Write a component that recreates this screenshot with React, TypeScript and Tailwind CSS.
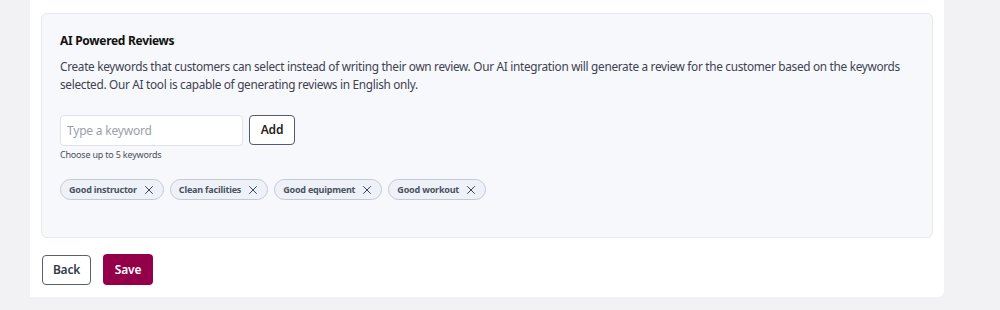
import { X } from 'lucide-react';

const KEYWORDS = ['Good instructor', 'Clean facilities', 'Good equipment', 'Good workout'];

const KeywordChip = ({ label }: { label: string }) => (
  <div className="flex items-center gap-[5px] h-[21px] pl-[8px] pr-[7px] rounded-full border border-[#c3c9d6] bg-[#eef1f8]">
    <span className="text-[9px] font-bold text-[#4a5160] leading-none tracking-[-0.2px]">{label}</span>
    <X className="w-[14px] h-[14px] text-[#3b4150]" strokeWidth={1.7} />
  </div>
);

export default function App() {
  return (
    <div
      className="w-[1000px] h-[310px] bg-[#f2f2f4] pl-[30px] tracking-[-0.2px]"
      style={{ fontFamily: '"Noto Sans", Inter, sans-serif' }}
    >
      <div className="w-[914px] h-[297px] bg-white rounded-br-md px-[11px] pt-[13px]">
        {/* AI reviews card */}
        <div className="w-[892px] h-[225px] rounded-md border border-[#e6e8ef] bg-[#f7f8fc] px-[18px] pt-[19px]">
          <h2 className="text-[12px] font-bold leading-[16px] text-[#111] tracking-[-0.3px]">AI Powered Reviews</h2>
          <p className="mt-[8px] text-[11.8px] leading-[18px] text-[#3d4250] tracking-[-0.3px]">
            Create keywords that customers can select instead of writing their own review. Our AI integration will generate a review for the customer based on the keywords selected. Our AI tool is capable of generating reviews in English only.
          </p>

          <div className="mt-[22px] flex items-start gap-[6px]">
            <input
              placeholder="Type a keyword"
              className="w-[183px] h-[31px] rounded-[4px] border border-[#dfe2ea] bg-white px-[6px] text-[12px] text-[#333] placeholder:text-[#9aa0ab] outline-none"
            />
            <button className="w-[46px] h-[30px] rounded-[4px] border border-[#555b68] bg-white text-[12px] font-semibold text-[#222]">
              Add
            </button>
          </div>
          <p className="mt-[3px] text-[9px] leading-[12px] text-[#4a4f5a]">Choose up to 5 keywords</p>

          <div className="mt-[18px] flex gap-[6px]">
            {KEYWORDS.map((k) => (
              <KeywordChip key={k} label={k} />
            ))}
          </div>
        </div>

        <div className="mt-[17px] ml-px flex gap-[12px]">
          <button className="w-[49px] h-[30px] rounded-[4px] border border-[#5a6070] bg-white text-[12px] font-semibold text-[#333a48]">
            Back
          </button>
          <button className="w-[50px] h-[31px] -mt-px rounded-[4px] bg-[#930049] text-[12px] font-semibold text-white">
            Save
          </button>
        </div>
      </div>
    </div>
  );
}
